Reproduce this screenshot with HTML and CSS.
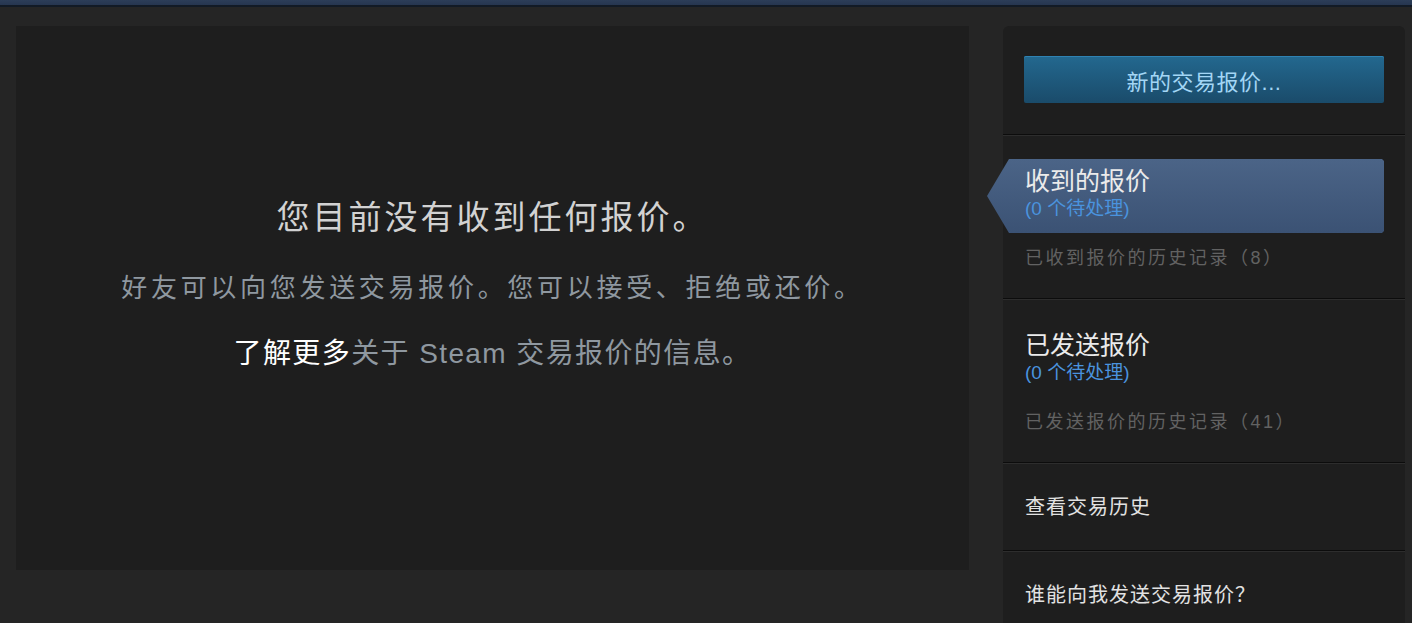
FILE: index.html
```html
<!DOCTYPE html>
<html lang="zh-CN">
<head>
    <meta charset="UTF-8">
    <title>交易报价</title>
    <link rel="stylesheet" href="styles.css">
</head>
<body>
    <div class="topbar"></div>
    <div class="page">
        <div class="main">
            <div class="empty">
                <h2 class="empty__title">您目前没有收到任何报价。</h2>
                <p class="empty__text">好友可以向您发送交易报价。您可以接受、拒绝或还价。</p>
                <p class="empty__more"><a href="#">了解更多</a>关于 Steam 交易报价的信息。</p>
            </div>
        </div>

        <div class="side">
            <div class="side__section side__top">
                <button type="button" class="newButton">新的交易报价...</button>
            </div>
            <div class="side__section side__offers">
                <div class="tab tab--active">
                    <div class="tab__title">收到的报价</div>
                    <div class="tab__count">(0 个待处理)</div>
                </div>
                <div class="history">已收到报价的历史记录（8）</div>
            </div>
            <div class="side__section side__offers">
                <div class="tab">
                    <div class="tab__title">已发送报价</div>
                    <div class="tab__count">(0 个待处理)</div>
                </div>
                <div class="history">已发送报价的历史记录（41）</div>
            </div>
            <div class="side__section side__link">查看交易历史</div>
            <div class="side__section side__link">谁能向我发送交易报价？</div>
        </div>
    </div>
</body>
</html>
```

FILE: styles.css
```css
* {
    box-sizing: border-box;
    margin: 0px;
    padding: 0px;
}
body {
    background-color: #252525;
    font-family: "Liberation Sans", "Noto Sans CJK SC", sans-serif;
    overflow: hidden;
}
.topbar {
    height: 7px;
    background: linear-gradient(to bottom, #2c3d58, #263650);
    border-bottom: 2px solid #121a25;
}
.page {
    display: flex;
    align-items: flex-start;
    padding: 19px 7px 0px 16px;
    gap: 34px;
}
.main {
    width: 953px;
    height: 544px;
    background-color: #1e1e1e;
}
.empty {
    padding-top: 169px;
    text-align: center;
}
.empty__title {
    font-size: 33px;
    font-weight: normal;
    letter-spacing: 3px;
    line-height: 46px;
    color: #d2d2d2;
}
.empty__text {
    margin-top: 29px;
    font-size: 26px;
    letter-spacing: 3.7px;
    line-height: 1.4;
    color: #8f98a0;
}
.empty__more {
    margin-top: 28px;
    font-size: 28px;
    letter-spacing: 1.4px;
    line-height: 1.4;
    color: #8f98a0;
}
.empty__more a {
    color: #ffffff;
    text-decoration: none;
}
.side {
    width: 402px;
    background-color: #1e1e1e;
    border-radius: 6px 6px 0px 0px;
}
.side__section {
    border-bottom: 1px solid #0c0c0c;
    box-shadow: 0px 1px 0px #2d2d2d;
    margin-bottom: 1px;
}
.side__top {
    padding: 30px 21px 31px 21px;
}
.newButton {
    width: 100%;
    height: 47px;
    border: none;
    border-radius: 2px;
    background: linear-gradient(to bottom, #23688f, #1a4b6a);
    box-shadow: inset 0px 1px 0px #2f82b2;
    color: #a3d6f5;
    font-family: inherit;
    font-size: 22px;
    letter-spacing: 0.5px;
}
.side__offers {
    padding: 23px 21px 0px 0px;
    height: 163px;
}
.tab {
    margin-left: 6px;
    height: 74px;
    padding: 7px 0px 0px 16px;
}
.tab--active {
    margin-left: -16px;
    padding-left: 38px;
    background: linear-gradient(to bottom, #4b6487, #3b5274);
    clip-path: polygon(22px 0px, calc(100% - 2px) 0px, 100% 2px, 100% calc(100% - 2px), calc(100% - 2px) 100%, 22px 100%, 0px 50%);
}
.tab__title {
    font-size: 25px;
    line-height: 30px;
    color: #ebebeb;
}
.tab__count {
    margin-top: 2px;
    font-size: 19px;
    line-height: 22px;
    color: #4a93de;
}
.history {
    margin-top: 13px;
    padding-left: 22px;
    font-size: 18px;
    letter-spacing: 2.5px;
    line-height: 24px;
    color: #626262;
}
.side__link {
    height: 87px;
    padding: 30px 22px 0px 22px;
    font-size: 20px;
    letter-spacing: 1px;
    line-height: 26px;
    color: #e2e2e2;
}
```
